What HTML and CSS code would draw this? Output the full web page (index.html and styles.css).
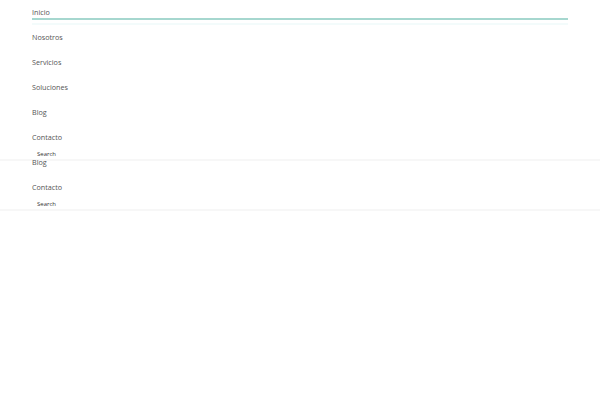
FILE: index.html
```html
<!DOCTYPE html>
<html lang="es">
<head>
  <meta charset="UTF-8" />
  <title>Inicio</title>
  <meta name="viewport" content="width=device-width, initial-scale=1.0" />
  <link rel="stylesheet" href="styles.css">
</head>
<body>
  <!-- Menu principal -->
  <header class="site-header">
    <nav class="main-nav">
      <ul class="menu">
        <li class="menu-item active"><a href="#">Inicio</a></li>
        <li class="menu-item"><a href="#">Nosotros</a></li>
        <li class="menu-item"><a href="#">Servicios</a></li>
        <li class="menu-item"><a href="#">Soluciones</a></li>
        <li class="menu-item"><a href="#">Blog</a></li>
        <li class="menu-item"><a href="#">Contacto</a></li>
      </ul>
      <div class="search">Search</div>
    </nav>
  </header>

  <!-- Menu fijo (copia) -->
  <header class="site-header sticky">
    <nav class="main-nav">
      <ul class="menu">
        <li class="menu-item"><a href="#">Blog</a></li>
        <li class="menu-item"><a href="#">Contacto</a></li>
      </ul>
      <div class="search">Search</div>
    </nav>
  </header>
</body>
</html>
```

FILE: styles.css
```css
/* Base */
body {
  margin: 0;
  padding: 0;
  background: #fff;
  font-family: "Open Sans", sans-serif;
  color: #555;
}
.site-header {
  border-bottom: 2px solid #f7f7f7;
}
.site-header.sticky { margin-top: -11px; }
.main-nav { padding: 0 32px; }
.menu {
  list-style: none;
  margin: 0;
  padding: 0;
}
.menu-item {
  height: 25px;
  line-height: 24px;
  font-size: 7.2px;
}
.menu-item a {
  color: #555;
  text-decoration: none;
}
.menu-item.active {
  position: relative;
}
.menu-item.active::before {
  content: "";
  position: absolute;
  left: 0;
  right: 0;
  top: 18px;
  height: 2px;
  background: #a6d7cf;
}
.menu-item.active::after {
  content: "";
  position: absolute;
  left: 0;
  right: 0;
  top: 23px;
  height: 2px;
  background: #f3fbfb;
}
.search {
  font-size: 6px;
  line-height: 9px;
  height: 9px;
  padding-left: 5px;
  color: #333;
}
```
